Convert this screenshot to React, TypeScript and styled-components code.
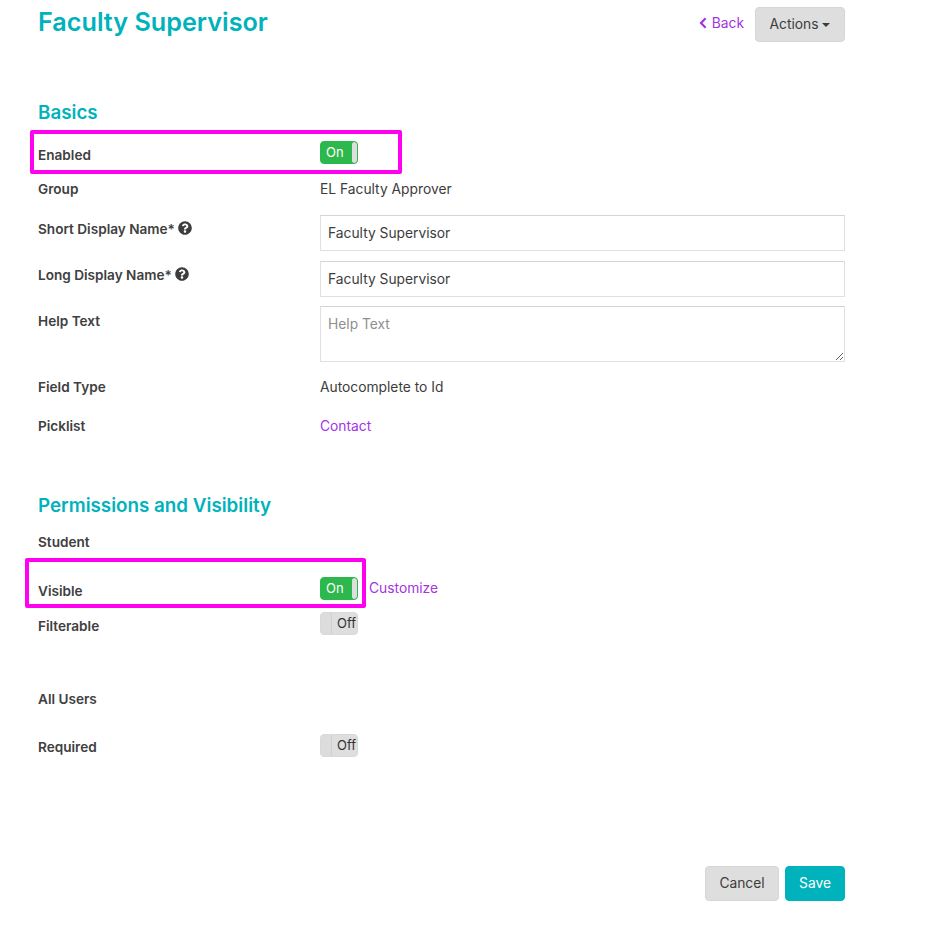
import React from "react";
import styled, { createGlobalStyle } from "styled-components";
import { FaQuestionCircle } from "react-icons/fa";

const Global = createGlobalStyle`
  html, body { margin: 0; padding: 0; background: #fff; }
  body { font-family: "Inter", "Liberation Sans", sans-serif; color: #3c3c3c; font-size: 13.8px; line-height: 20px; }
  * { box-sizing: border-box; }
`;

const Page = styled.div`
  position: relative;
  width: 936px;
  height: 926px;
  padding: 0 91px 0 38px;
  overflow: hidden;
`;
const Header = styled.header`
  display: flex;
  justify-content: space-between;
  align-items: flex-start;
  height: 93px;
  padding-top: 7px;
`;
const Title = styled.h1`
  margin: -1.5px 0 0;
  font-size: 25.2px;
  line-height: 32px;
  font-weight: 600;
  color: #00b2bb;
`;
const HeaderActions = styled.div`
  display: flex;
  align-items: center;
  gap: 11px;
`;
const LinkText = styled.a`
  color: #a334e4;
  text-decoration: none;
`;
const BackLink = styled(LinkText)`
  display: inline-flex;
  align-items: center;
  gap: 5px;
  margin-top: -4px;
  svg { width: 8px; height: 12px; }
`;
const CustomizeLink = styled(LinkText)`
  margin-top: -2px;
`;
const Button = styled.button<{ $primary?: boolean; $w: number }>`
  width: ${(p) => p.$w}px;
  height: 35px;
  border-radius: 4px;
  border: 1px solid ${(p) => (p.$primary ? "#00b2bb" : "#d6d6d6")};
  background: ${(p) => (p.$primary ? "#00b2bb" : "#dedede")};
  color: ${(p) => (p.$primary ? "#fff" : "#3c3c3c")};
  font: inherit;
  padding: 0 0 2px;
`;
const Caret = styled.span`
  display: inline-block;
  margin-left: 4px;
  vertical-align: 2px;
  border-top: 4px solid #3c3c3c;
  border-left: 4px solid transparent;
  border-right: 4px solid transparent;
`;
const SectionTitle = styled.h2<{ $h: number }>`
  margin: 0;
  height: ${(p) => p.$h}px;
  padding-top: 1px;
  font-size: 18.8px;
  line-height: 38px;
  font-weight: 600;
  color: #00b2bb;
`;
const Row = styled.div<{ $h: number }>`
  display: grid;
  grid-template-columns: 282px 1fr;
  align-items: start;
  height: ${(p) => p.$h}px;
`;
const Label = styled.div<{ $pt?: number }>`
  display: flex;
  align-items: center;
  gap: 4px;
  padding-top: ${(p) => p.$pt ?? 0}px;
  font-size: 13.6px;
  font-weight: 600;
  color: #404040;
  svg { width: 14px; height: 14px; margin-top: -2px; margin-left: -1px; color: #3c3c3c; }
`;
const Value = styled.div`
  display: flex;
  align-items: center;
  gap: 11px;
`;
const TextInput = styled.input`
  display: block;
  width: 100%;
  height: 36px;
  padding: 0 7px;
  border: 1px solid #e0e0e0;
  border-top-color: #d4d4d4;
  font: inherit;
  color: #3c3c3c;
  outline: none;
`;
const TextArea = styled.textarea`
  display: block;
  width: 100%;
  height: 56px;
  padding: 7px;
  border: 1px solid #e0e0e0;
  border-top-color: #d4d4d4;
  font: inherit;
  color: #3c3c3c;
  outline: none;
  &::placeholder { color: #8f8f8f; opacity: 1; }
`;
const Toggle = styled.div<{ $on?: boolean }>`
  display: flex;
  width: 38px;
  height: 23px;
  border-radius: 4px;
  overflow: hidden;
  font-size: 13px;
  line-height: 21px;
  flex-direction: ${(p) => (p.$on ? "row" : "row-reverse")};
  background: ${(p) => (p.$on ? "#2cb84c" : "#dedede")};
  color: ${(p) => (p.$on ? "#fff" : "#333")};
  border: 1px solid ${(p) => (p.$on ? "#2cb84c" : "#d9d9d9")};
`;
const ToggleText = styled.span<{ $on?: boolean }>`
  flex: 1;
  padding-left: ${(p) => (p.$on ? 5 : 6)}px;
`;
const ToggleHandle = styled.span<{ $on?: boolean }>`
  width: ${(p) => (p.$on ? 5 : 10)}px;
  border-radius: ${(p) => (p.$on ? "3px" : "3px 0 0 3px")};
  background: ${(p) => (p.$on ? "#dedede" : "#dcdcdc")};
  box-shadow: ${(p) => (p.$on ? "none" : "1px 0 0 #d0d0d0")};
`;
const Footer = styled.footer`
  display: flex;
  justify-content: flex-end;
  gap: 6px;
`;
const Highlight = styled.div<{ $x: number; $y: number; $w: number; $h: number }>`
  position: absolute;
  left: ${(p) => p.$x}px;
  top: ${(p) => p.$y}px;
  width: ${(p) => p.$w}px;
  height: ${(p) => p.$h}px;
  border: 4px solid #ff00f0;
  border-radius: 2px;
  pointer-events: none;
`;

const Switch = ({ on }: { on?: boolean }) => (
  <Toggle $on={on}>
    <ToggleText $on={on}>{on ? "On" : "Off"}</ToggleText>
    <ToggleHandle $on={on} />
  </Toggle>
);

const Chevron = () => (
  <svg viewBox="0 0 8 12" fill="none" stroke="currentColor" strokeWidth="2.2">
    <path d="M6.6 1.2 2 6l4.6 4.8" />
  </svg>
);

export default function App() {
  return (
    <Page>
      <Global />
      <Header>
        <Title>Faculty Supervisor</Title>
        <HeaderActions>
          <BackLink href="#"><Chevron />Back</BackLink>
          <Button $w={90}>Actions<Caret /></Button>
        </HeaderActions>
      </Header>

      <SectionTitle $h={48}>Basics</SectionTitle>
      <Row $h={38}><Label $pt={4}>Enabled</Label><Value><Switch on /></Value></Row>
      <Row $h={36}><Label>Group</Label><Value>EL Faculty Approver</Value></Row>
      <Row $h={46}>
        <Label $pt={4}>Short Display Name* <FaQuestionCircle /></Label>
        <Value><TextInput readOnly value="Faculty Supervisor" /></Value>
      </Row>
      <Row $h={45}>
        <Label $pt={4}>Long Display Name* <FaQuestionCircle /></Label>
        <Value><TextInput readOnly value="Faculty Supervisor" /></Value>
      </Row>
      <Row $h={71}>
        <Label $pt={5}>Help Text</Label>
        <Value><TextArea placeholder="Help Text" /></Value>
      </Row>
      <Row $h={39}><Label>Field Type</Label><Value>Autocomplete to Id</Value></Row>
      <Row $h={70}><Label>Picklist</Label><Value><LinkText href="#">Contact</LinkText></Value></Row>

      <SectionTitle $h={46}>Permissions and Visibility</SectionTitle>
      <Row $h={45}><Label>Student</Label></Row>
      <Row $h={35}>
        <Label $pt={4}>Visible</Label>
        <Value><Switch on /><CustomizeLink href="#">Customize</CustomizeLink></Value>
      </Row>
      <Row $h={77}><Label $pt={4}>Filterable</Label><Value><Switch /></Value></Row>
      <Row $h={45}><Label>All Users</Label></Row>
      <Row $h={132}><Label $pt={3}>Required</Label><Value><Switch /></Value></Row>

      <Footer>
        <Button $w={74}>Cancel</Button>
        <Button $w={60} $primary>Save</Button>
      </Footer>

      <Highlight $x={30} $y={130} $w={372} $h={44} />
      <Highlight $x={25} $y={558} $w={341} $h={50} />
    </Page>
  );
}
